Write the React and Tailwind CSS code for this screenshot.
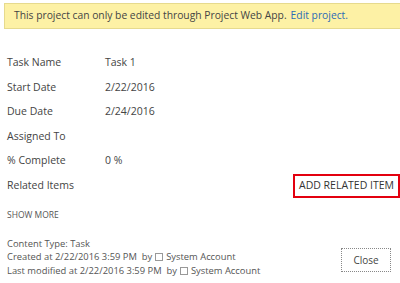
import React from 'react';

const rows = [
  ['Task Name', 'Task 1'],
  ['Start Date', '2/22/2016'],
  ['Due Date', '2/24/2016'],
  ['Assigned To', ''],
  ['% Complete', '0 %'],
];

const App = () => {
  return (
    <div className="w-[400px] h-[283px] bg-white overflow-hidden text-[#444] text-[10.5px] font-['Open_Sans',sans-serif]">
      <div className="ml-[4px] mt-[3px] h-[26px] flex items-center pl-[9px] bg-[#fdf1a5] border border-r-0 border-[#e6da8e] text-[10.3px]">
        <span>This project can only be edited through Project Web App.</span>
        <span className="ml-[4px] text-[#2b6bb5]">Edit project.</span>
      </div>

      <div className="mt-[22px] pl-[7px]">
        {rows.map(([label, value]) => (
          <div key={label} className="flex items-center h-[24.5px]">
            <div className="w-[98px]">{label}</div>
            <div>{value}</div>
          </div>
        ))}
        <div className="flex items-center justify-between h-[24.5px]">
          <div>Related Items</div>
          <div className="h-[24px] w-[107px] flex items-center justify-center border-2 border-[#e3000f] text-[#333] text-[10.5px]">
            ADD RELATED ITEM
          </div>
        </div>
      </div>

      <div className="mt-[11px] pl-[7px] text-[8.5px] text-[#555]">SHOW MORE</div>

      <div className="mt-[15px] pl-[7px] pr-[9px] flex items-end justify-between">
        <div className="text-[9.4px] leading-[13.5px] text-[#555]">
          <div>Content Type: Task</div>
          <div>
            Created at 2/22/2016 3:59 PM&nbsp; by
            <span className="inline-block w-[8px] h-[8px] border border-[#999] mx-[3px] align-[-1px]"></span>
            System Account
          </div>
          <div>
            Last modified at 2/22/2016 3:59 PM&nbsp; by
            <span className="inline-block w-[8px] h-[8px] border border-[#999] mx-[3px] align-[-1px]"></span>
            System Account
          </div>
        </div>
        <button className="w-[50px] h-[24px] mb-[5px] border border-dotted border-[#888] bg-white text-[10px] text-[#444]">
          Close
        </button>
      </div>
    </div>
  );
};

export default App;
